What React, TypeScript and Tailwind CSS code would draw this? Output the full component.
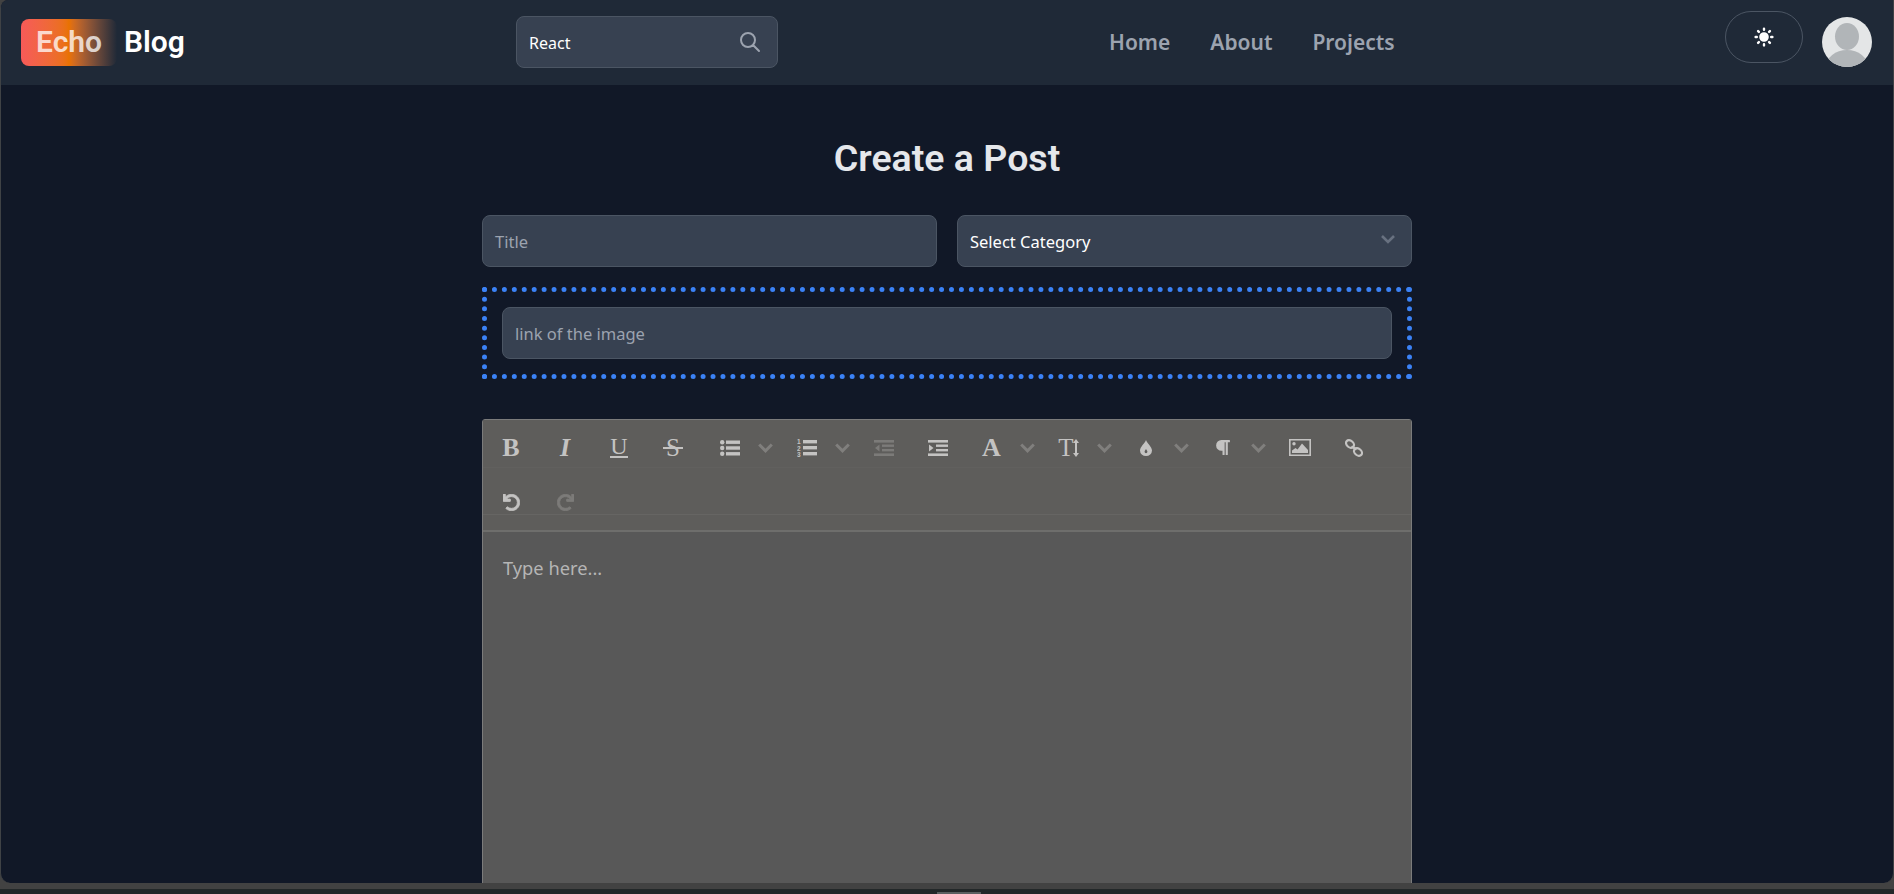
import React from 'react';
import { HiOutlineSearch, HiSun } from 'react-icons/hi';
import { FaParagraph, FaUndo, FaRedo } from 'react-icons/fa';

const serif = 'font-["Liberation_Serif",serif]';
const ui = 'font-["Noto_Sans",sans-serif]';

function ToolBtn({ children, muted, nudge }: { children: React.ReactNode; muted?: boolean; nudge?: boolean }) {
  return (
    <span className={`w-[54px] h-[55px] flex items-center justify-center ${nudge ? 'pl-[5px]' : ''} ${muted ? 'text-[#7c7b79]' : 'text-[#c4c3c2]'}`}>
      {children}
    </span>
  );
}

function Caret() {
  return (
    <span className="w-[23px] h-[55px] flex items-center justify-center text-[#807f7d]">
      <svg width="15" height="10" viewBox="0 0 15 10" fill="none" stroke="currentColor" strokeWidth="3">
        <path d="M1.2 1.5 7.5 7.8 13.8 1.5" />
      </svg>
    </span>
  );
}

function BulletIcon() {
  return (
    <svg width="20" height="16" viewBox="0 0 20 16" fill="currentColor">
      <circle cx="2.2" cy="2.2" r="2.2" />
      <circle cx="2.2" cy="8" r="2.2" />
      <circle cx="2.2" cy="13.8" r="2.2" />
      <rect x="6" y="0.5" width="14" height="3.4" />
      <rect x="6" y="6.3" width="14" height="3.4" />
      <rect x="6" y="12.1" width="14" height="3.4" />
    </svg>
  );
}

function NumberIcon() {
  return (
    <svg width="20" height="19" viewBox="0 0 20 19" fill="currentColor">
      <text x="0" y="6" fontSize="6.5" fontWeight="700" fontFamily="Liberation Sans">1</text>
      <text x="0" y="12.5" fontSize="6.5" fontWeight="700" fontFamily="Liberation Sans">2</text>
      <text x="0" y="19" fontSize="6.5" fontWeight="700" fontFamily="Liberation Sans">3</text>
      <rect x="6" y="2" width="14" height="3.4" />
      <rect x="6" y="8" width="14" height="3.4" />
      <rect x="6" y="14" width="14" height="3.4" />
    </svg>
  );
}

function IndentIcon({ out }: { out?: boolean }) {
  return (
    <svg width="20" height="16" viewBox="0 0 20 16" fill="currentColor">
      <rect x="0" y="0" width="20" height="2.6" />
      <rect x="8" y="4.5" width="12" height="2.4" />
      <rect x="8" y="9" width="12" height="2.4" />
      <rect x="0" y="13.4" width="20" height="2.6" />
      <path d={out ? 'M5.5 4.5 1 8 5.5 11.5Z' : 'M1 4.5 5.5 8 1 11.5Z'} />
    </svg>
  );
}

function ImageIcon() {
  return (
    <svg width="22" height="17" viewBox="0 0 22 17" fill="currentColor">
      <path fillRule="evenodd" d="M0 0h22v17H0ZM1.6 1.6v13.8h18.8V1.6Z" />
      <circle cx="5" cy="4.8" r="1.7" />
      <path d="M3 14v-2.5l3.5-2.5 2 1.5 4.5-6 6 6.5V14Z" />
    </svg>
  );
}

function LinkIcon() {
  return (
    <svg width="18" height="18" viewBox="0 0 18 18" fill="none" stroke="currentColor" strokeWidth="2.2">
      <ellipse cx="5" cy="5" rx="4.4" ry="3.3" transform="rotate(40 5 5)" />
      <ellipse cx="13" cy="13" rx="4.4" ry="3.3" transform="rotate(40 13 13)" />
      <path d="M6.5 7.5 11.5 10.5" />
    </svg>
  );
}

function DropIcon() {
  return (
    <svg width="12" height="16" viewBox="0 0 12 16" fill="currentColor">
      <path
        fillRule="evenodd"
        d="M6 0C7 3 12 7 12 10.5A6 5.5 0 0 1 0 10.5C0 7 5 3 6 0ZM6 9C5.4 10 4.6 10.8 4.6 11.8A1.4 1.4 0 0 0 7.4 11.8C7.4 10.8 6.6 10 6 9Z"
      />
    </svg>
  );
}

function TextSizeIcon() {
  return (
    <span className="flex items-center">
      <span className={`${serif} text-[25px] leading-none`}>T</span>
      <svg width="6" height="18" viewBox="0 0 6 18" fill="currentColor" className="-ml-[1px]">
        <path d="M3 0 6 4H4v10h2l-3 4-3-4h2V4H0Z" />
      </svg>
    </span>
  );
}

export default function App() {
  return (
    <div className="h-[894px] overflow-hidden bg-[#232829] font-['Roboto',sans-serif]">
      <div className="h-[889px] bg-[#424242]">
        <div className="h-[883px] overflow-hidden rounded-b-[10px] rounded-tl-[8px] border-x border-[#3f4245] bg-[#111827] flex flex-col">
          {/* Navbar */}
          <nav className="h-[85px] shrink-0 bg-[#1f2937] flex items-center pl-[20px] pr-[21px] pb-[1px]">
            <div className="w-[495px] flex items-center text-[30px] font-semibold leading-none">
              <span className="h-[47px] w-[96px] flex items-center justify-center rounded-lg bg-gradient-to-r from-[#f75a58] via-[#e97200] to-[#1f2937] text-white/75">
                Echo
              </span>
              <span className="ml-[7px] text-white">Blog</span>
            </div>
            <div className={`${ui} w-[262px] h-[52px] flex items-center justify-between rounded-lg border border-[#4b5563] bg-[#374151] pl-[12px] pr-[15px] text-[16px] text-white`}>
              <span className="pt-[1px]">React</span>
              <HiOutlineSearch className="text-[24px] text-[#9ca3af]" />
            </div>
            <div className={`${ui} ml-[331px] pt-[2px] flex items-center gap-[40px] text-[21px] font-semibold text-[#9ca3af]`}>
              <span>Home</span>
              <span>About</span>
              <span>Projects</span>
            </div>
            <div className="ml-auto flex items-center gap-[19px]">
              <span className="w-[78px] h-[52px] -mt-[10px] flex items-center justify-center rounded-[26px] border border-[#4b5563] text-white text-[24px]">
                <HiSun />
              </span>
              <span className="w-[50px] h-[50px] rounded-full overflow-hidden bg-[#e4e6e7]">
                <svg viewBox="0 0 50 50" className="w-full h-full">
                  <ellipse cx="25" cy="19.5" rx="12" ry="13.5" fill="#b1b5b8" />
                  <ellipse cx="25" cy="50" rx="21" ry="17" fill="#b1b5b8" />
                </svg>
              </span>
            </div>
          </nav>

          {/* Create post form */}
          <main className="flex-1 w-[930px] mx-auto">
            <h1 className="mt-[50px] text-center text-[37.5px] leading-[46px] font-semibold text-[#e5e7eb]">Create a Post</h1>
            <div className={`${ui} mt-[34px] flex gap-[20px] text-[16.5px]`}>
              <div className="flex-1 h-[52px] flex items-center rounded-lg border border-[#4b5563] bg-[#374151] px-[12px] pt-[3px] text-[#9ca3af]">Title</div>
              <div className="flex-1 h-[52px] flex items-center justify-between rounded-lg border border-[#4b5563] bg-[#374151] px-[12px] text-white">
                <span className="pt-[3px]">Select Category</span>
                <svg width="14" height="9" viewBox="0 0 14 9" fill="none" stroke="#687180" strokeWidth="2.6" className="-mt-[4px] mr-[4px]">
                  <path d="M1 1 7 7 13 1" />
                </svg>
              </div>
            </div>
            <div className="mt-[20px] p-[15px] border-[5px] border-dotted border-[#3b82f6]">
              <div className={`${ui} h-[52px] flex items-center rounded-lg border border-[#4b5563] bg-[#374151] px-[12px] pt-[3px] text-[16.5px] text-[#9ca3af]`}>link of the image</div>
            </div>
            <div className="mt-[40px] rounded-t-[3px] border border-[#7b7b7b] bg-[#585858]">
              <div className="relative h-[112px] bg-[#5e5d5b] border-b-2 border-[#6e6e6c]">
                <div className="absolute left-0 right-0 top-[47px] h-px bg-[#61605e]" />
                <div className="absolute left-0 right-0 top-[94px] h-px bg-[#666563]" />
                <div className="relative flex flex-wrap content-start pl-[1px]">
                  <ToolBtn><span className={`${serif} text-[26px] leading-none font-bold`}>B</span></ToolBtn>
                  <ToolBtn><span className={`${serif} text-[26px] leading-none font-bold italic`}>I</span></ToolBtn>
                  <ToolBtn>
                    <span className="flex flex-col items-center">
                      <span className={`${serif} text-[24px] leading-[18px]`}>U</span>
                      <span className="mt-[1px] w-[18px] h-[2px] bg-[#c4c3c2]" />
                    </span>
                  </ToolBtn>
                  <ToolBtn>
                    <span className="relative flex justify-center w-[20px]">
                      <span className={`${serif} text-[25px] leading-none`}>S</span>
                      <span className="absolute left-0 right-0 top-[12px] h-[2px] bg-[#c4c3c2]" />
                    </span>
                  </ToolBtn>
                  <ToolBtn nudge><BulletIcon /></ToolBtn>
                  <Caret />
                  <ToolBtn nudge><NumberIcon /></ToolBtn>
                  <Caret />
                  <ToolBtn nudge muted><IndentIcon out /></ToolBtn>
                  <ToolBtn nudge><IndentIcon /></ToolBtn>
                  <ToolBtn nudge><span className={`${serif} text-[26px] leading-none font-bold`}>A</span></ToolBtn>
                  <Caret />
                  <ToolBtn nudge><TextSizeIcon /></ToolBtn>
                  <Caret />
                  <ToolBtn nudge><DropIcon /></ToolBtn>
                  <Caret />
                  <ToolBtn nudge><FaParagraph className="text-[17px]" /></ToolBtn>
                  <Caret />
                  <ToolBtn nudge><ImageIcon /></ToolBtn>
                  <ToolBtn nudge><LinkIcon /></ToolBtn>
                  <ToolBtn><FaUndo className="text-[17px]" stroke="currentColor" strokeWidth={24} /></ToolBtn>
                  <ToolBtn muted><FaRedo className="text-[17px]" stroke="currentColor" strokeWidth={24} /></ToolBtn>
                </div>
              </div>
              <div className={`${ui} h-[400px] px-[20px] py-[22px] text-[18.3px] text-[#b5b5b5]`}>Type here...</div>
            </div>
          </main>
        </div>
      </div>
      <div className="h-[5px] flex justify-center">
        <span className="ml-[24px] mt-[3px] w-[44px] h-[2px] bg-[#5a5f60]" />
      </div>
    </div>
  );
}
